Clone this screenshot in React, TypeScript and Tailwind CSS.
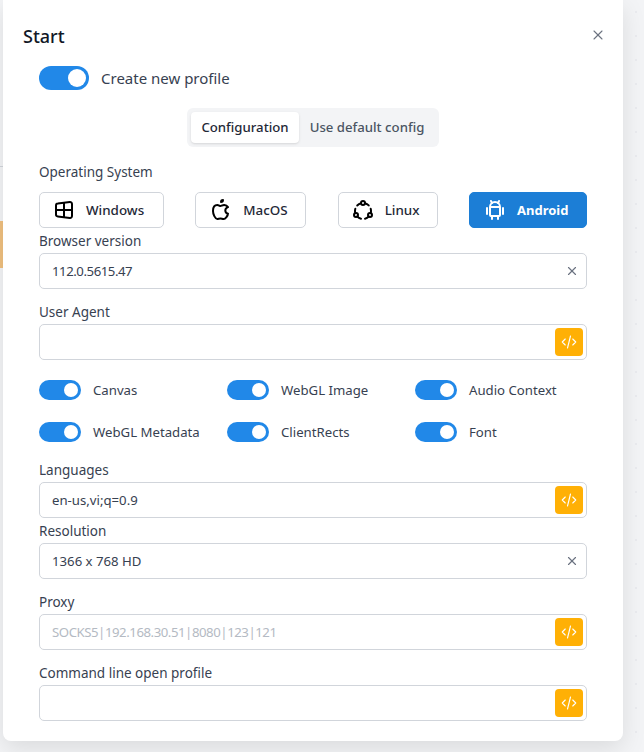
import { X } from "lucide-react";
import {
  TbBrandWindows,
  TbBrandApple,
  TbBrandUbuntu,
  TbBrandAndroid,
  TbCode,
} from "react-icons/tb";

const osList = [
  { name: "Windows", Icon: TbBrandWindows, box: "w-[125px] pl-[12px]" },
  { name: "MacOS", Icon: TbBrandApple, box: "w-[111px] pl-[13px]" },
  { name: "Linux", Icon: TbBrandUbuntu, box: "w-[100px] pl-[12px]" },
  { name: "Android", Icon: TbBrandAndroid, box: "w-[118px] pl-[13px]", active: true },
];

const switches = ["Canvas", "WebGL Image", "Audio Context", "WebGL Metadata", "ClientRects", "Font"];

function Toggle({ big }: { big?: boolean }) {
  return (
    <span
      className={
        big
          ? "flex h-6 w-[50px] shrink-0 items-center justify-end rounded-full bg-[#2188e8] pr-[3px]"
          : "flex h-5 w-[42px] shrink-0 items-center justify-end rounded-full bg-[#2188e8] pr-[3px]"
      }
    >
      <span className={big ? "size-[18px] rounded-full bg-white" : "size-[14px] rounded-full bg-white"} />
    </span>
  );
}

function Field({
  label,
  value,
  placeholder,
  action,
  tight,
  className,
}: {
  label: string;
  value?: string;
  placeholder?: string;
  action: "code" | "clear";
  tight?: boolean;
  className?: string;
}) {
  const color = placeholder ? "text-[#b4bac3]" : "text-[#374151]";
  return (
    <div className={className}>
      <div className="mb-[2px] h-5 text-[13.5px] leading-5 text-[#374151]">{label}</div>
      <div className="flex h-9 items-center justify-between rounded-[5px] border border-[#d1d5db] pl-3 pr-[3px]">
        <span className={`pt-px text-[13.2px] ${color} ${tight ? "tracking-[-0.45px]" : ""}`}>
          {value || placeholder}
        </span>
        {action === "code" ? (
          <button className="flex size-7 items-center justify-center rounded bg-[#ffb005] text-white">
            <TbCode size={18} strokeWidth={1.5} />
          </button>
        ) : (
          <X size={14} strokeWidth={2} className="mr-[4px] text-[#6b7280]" />
        )}
      </div>
    </div>
  );
}

export default function App() {
  return (
    <div className="relative h-[752px] w-[644px] overflow-hidden bg-[#f3f4f6] bg-[radial-gradient(#eaebef_1px,transparent_1px)] bg-[size:24px_24px] font-['Noto_Sans',sans-serif]">
      {/* page behind the dialog */}
      <div className="absolute left-0 top-[166px] h-px w-[3px] bg-[#d1d5db]" />
      <div className="absolute left-0 top-[221px] h-[47px] w-[3px] bg-[#f0c07f]" />

      <div className="relative ml-[3px] h-[741px] w-[620px] rounded-b-lg bg-white shadow-[0_8px_24px_rgba(0,0,0,0.1)]">
        <div className="flex h-[66px] items-start justify-between pl-5 pr-[17px] pt-[21px]">
          <h1 className="text-[18px] font-medium leading-[30px] text-[#111827]">Start</h1>
          <X size={16} strokeWidth={1.6} className="mt-[6px] text-[#6b7280]" />
        </div>

        <div className="px-9">
          <div className="flex items-center gap-3">
            <Toggle big />
            <span className="text-[15px] text-[#374151]">Create new profile</span>
          </div>

          <div className="mt-[18px] flex justify-center">
            <div className="flex h-[39px] w-[252px] items-center rounded-md bg-[#f3f4f6] p-1">
              <div className="flex h-[31px] w-[108px] items-center justify-center rounded bg-white text-[13.2px] font-medium text-[#1f2937] shadow-sm">
                Configuration
              </div>
              <div className="flex h-[31px] flex-1 items-center justify-center text-[13.2px] font-medium text-[#4b5563]">
                Use default config
              </div>
            </div>
          </div>

          <div className="mt-[15px] h-5 text-[13.5px] leading-5 text-[#374151]">Operating System</div>

          <div className="mt-[10px] flex justify-between">
            {osList.map(({ name, Icon, box, active }) => (
              <button
                key={name}
                className={
                  active
                    ? `flex h-9 ${box} items-center gap-[10px] rounded-[5px] border border-[#1c7ed6] bg-[#1c7ed6] text-[13px] font-bold text-white`
                    : `flex h-9 ${box} items-center gap-[10px] rounded-[5px] border border-[#d1d5db] text-[13.4px] font-medium text-[#1f2937]`
                }
              >
                <Icon size={24} className={active ? "text-white" : "text-black"} />
                <span className="pt-px">{name}</span>
              </button>
            ))}
          </div>

          <Field className="mt-[3px]" label="Browser version" value="112.0.5615.47" action="clear" tight />
          <Field className="mt-[13px]" label="User Agent" action="code" />

          <div className="mt-5 grid grid-cols-[188px_188px_1fr] gap-y-[22px]">
            {switches.map((s) => (
              <div key={s} className="flex h-5 items-center gap-3">
                <Toggle />
                <span className="pt-px text-[13.2px] whitespace-nowrap text-[#374151]">{s}</span>
              </div>
            ))}
          </div>

          <Field className="mt-[18px]" label="Languages" value="en-us,vi;q=0.9" action="code" />
          <Field className="mt-[3px]" label="Resolution" value="1366 x 768 HD" action="clear" />
          <Field className="mt-[13px]" label="Proxy" placeholder="SOCKS5|192.168.30.51|8080|123|121" action="code" tight />
          <Field className="mt-[13px]" label="Command line open profile" action="code" />
        </div>
      </div>
    </div>
  );
}
